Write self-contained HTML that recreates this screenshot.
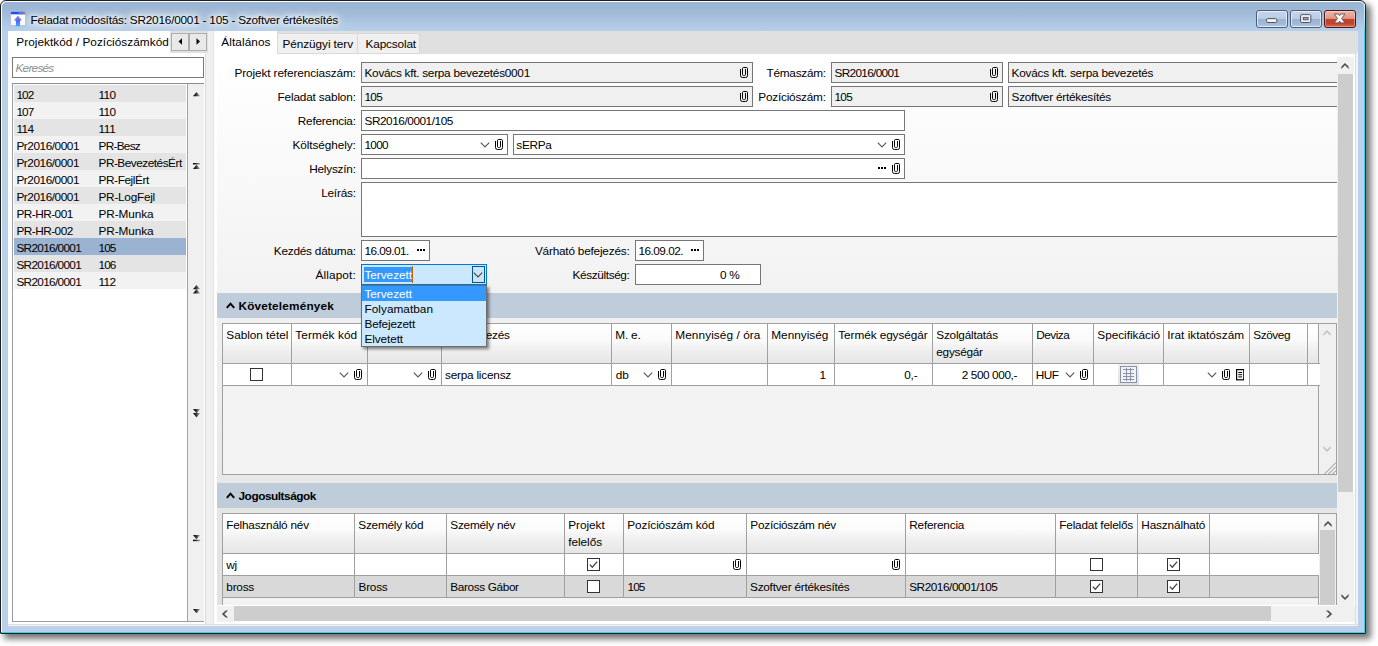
<!DOCTYPE html>
<html lang="hu"><head><meta charset="utf-8"><title>Feladat módosítás</title><style>
html,body{margin:0;padding:0;}
body{width:1378px;height:646px;background:#fff;position:relative;overflow:hidden;font-family:"Liberation Sans",sans-serif;font-size:11.8px;color:#000;}
body div,body span.t,svg.i{position:absolute;}
span.t{white-space:pre;display:block;height:16px;line-height:16px;}
#win{left:0;top:0;width:1366px;height:634px;box-sizing:border-box;border:1px solid #1e1e1e;border-radius:6px 6px 1px 1px;background:#b9d1ea;box-shadow:inset 1px 1px 0 0 rgba(255,255,255,.92),inset 0 0 0 1px rgba(255,255,255,.4), 4.5px 4.5px 6px 0 rgba(0,0,0,.54);}
#titlebar{left:2px;top:2px;width:1362px;height:29px;border-radius:5px 5px 0 0;background:linear-gradient(#99b4d3 0%,#a0bad8 40%,#afc8e3 75%,#b7d0ea 100%);}
.cb{top:10px;height:18px;box-sizing:border-box;border:1px solid #4d5d7a;border-radius:3px;background:linear-gradient(#c4d5ea 0%,#bacee6 46%,#9cb4d3 52%,#a2bad8 80%,#b6cce6 100%);box-shadow:inset 0 0 0 1px rgba(255,255,255,.6);}
.cb svg{position:absolute;left:0;top:0;}
.cb.close{background:linear-gradient(#ecb6a8 0%,#e09a88 46%,#c2452c 52%,#c04028 75%,#d66a4c 100%);border-color:#4a1520;box-shadow:inset 0 0 0 1px rgba(255,255,255,.35);}
#sp{overflow:hidden;}
</style></head><body>
<div id="win"></div>
<div id="titlebar"></div>
<svg width="0" height="0" style="position:absolute"><defs><linearGradient id="ag" x1="0" x2="0" y1="0" y2="1"><stop offset="0" stop-color="#9a8cf2"/><stop offset="0.5" stop-color="#5462fa"/><stop offset="1" stop-color="#3fa8ff"/></linearGradient></defs></svg>
<svg class="i" style="left:10px;top:11px;" width="16" height="16" viewBox="0 0 16 16"><rect x="0.5" y="0.5" width="15" height="14" fill="#fcfcf7" stroke="#b4bdf0"/><rect x="0.8" y="0.8" width="14.4" height="2.5" fill="#1f4fe2"/><rect x="8.5" y="0.8" width="4.3" height="2.5" fill="#4c7cec"/><rect x="13" y="1" width="2" height="2.2" fill="#f0602e"/><path d="M7.9 4.6L11.9 9.6H10V15.2H5.9V9.6H4Z" fill="url(#ag)"/></svg>
<span class="t" style="top:12px;letter-spacing:-0.224px;left:30.5px;text-shadow:0 0 5px #fff,0 0 7px #fff,0 0 9px #fff,0 0 12px #fff,0 0 14px rgba(255,255,255,.9);">Feladat módosítás: SR2016/0001 - 105 - Szoftver értékesítés</span>
<div class="cb" style="left:1256px;width:32px;"><svg width="30" height="16" viewBox="0 0 30 16"><rect x="9.6" y="7.6" width="10.2" height="3.9" rx="1.2" fill="#f2f2f2" stroke="#4f5560" stroke-width="1"/></svg></div>
<div class="cb" style="left:1290px;width:32px;"><svg width="30" height="16" viewBox="0 0 30 16"><rect x="9.6" y="3.6" width="10.2" height="7.9" rx="1.2" fill="#f2f2f2" stroke="#4f5560" stroke-width="1"/><rect x="12.3" y="6.4" width="4.8" height="2.4" fill="#8ea8cc" stroke="#4f5560" stroke-width="0.9"/></svg></div>
<div class="cb close" style="left:1324px;width:32px;"><svg width="30" height="16" viewBox="0 0 30 16"><path transform="translate(9.2,3)" d="M0 0H4.2L5.4 1.7L6.6 0H10.8L7.5 4.45L10.8 8.9H6.6L5.4 7.2L4.2 8.9H0L3.3 4.45Z" fill="#f6f6f6" stroke="#6a5050" stroke-width="0.9" stroke-linejoin="round"/></svg></div>
<div style="left:1364px;top:4px;width:1px;height:629px;background:linear-gradient(#d4f3fa 0,#9be7f6 18px,#2ed3ee 30px);"></div>
<div style="left:1px;top:632px;width:1364px;height:1px;background:#2ed3ee;"></div>
<div style="left:8px;top:31px;width:1350px;height:595px;background:#fff;"></div>
<span class="t" style="top:34px;letter-spacing:0.041px;left:16.3px;">Projektkód / Pozíciószámkód</span>
<div style="left:12px;top:57px;width:192px;height:21px;background:#fff;border:1px solid #7a7a7a;box-sizing:border-box;"></div>
<span class="t" style="top:60px;letter-spacing:-0.756px;left:15.5px;font-style:italic;color:#8e8e8e;">Keresés</span>
<div style="left:12px;top:83px;width:192px;height:539px;background:#fff;border:1px solid #9a9da6;border-top-color:#8a8d94;border-right:none;box-sizing:border-box;"></div>
<div style="left:14px;top:85px;width:172px;height:17px;background:#e4e4e4;"></div>
<span class="t" style="top:87px;letter-spacing:-0.896px;left:16.4px;">102</span>
<span class="t" style="top:87px;letter-spacing:-0.604px;left:98.5px;">110</span>
<div style="left:14px;top:102px;width:172px;height:17px;background:#f2f2f2;"></div>
<span class="t" style="top:104px;letter-spacing:-0.896px;left:16.4px;">107</span>
<span class="t" style="top:104px;letter-spacing:-0.604px;left:98.5px;">110</span>
<div style="left:14px;top:119px;width:172px;height:17px;background:#e4e4e4;"></div>
<span class="t" style="top:121px;letter-spacing:-0.604px;left:16.4px;">114</span>
<span class="t" style="top:121px;letter-spacing:-0.312px;left:98.5px;">111</span>
<div style="left:14px;top:136px;width:172px;height:17px;background:#f2f2f2;"></div>
<span class="t" style="top:138px;letter-spacing:-0.444px;left:16.4px;">Pr2016/0001</span>
<span class="t" style="top:138px;letter-spacing:-0.722px;left:98.5px;">PR-Besz</span>
<div style="left:14px;top:153px;width:172px;height:17px;background:#e4e4e4;"></div>
<span class="t" style="top:155px;letter-spacing:-0.444px;left:16.4px;">Pr2016/0001</span>
<span class="t" style="top:155px;letter-spacing:-0.487px;left:98.5px;">PR-BevezetésÉrt</span>
<div style="left:14px;top:170px;width:172px;height:17px;background:#f2f2f2;"></div>
<span class="t" style="top:172px;letter-spacing:-0.444px;left:16.4px;">Pr2016/0001</span>
<span class="t" style="top:172px;letter-spacing:-0.392px;left:98.5px;">PR-FejlÉrt</span>
<div style="left:14px;top:187px;width:172px;height:17px;background:#e4e4e4;"></div>
<span class="t" style="top:189px;letter-spacing:-0.444px;left:16.4px;">Pr2016/0001</span>
<span class="t" style="top:189px;letter-spacing:-0.253px;left:98.5px;">PR-LogFejl</span>
<div style="left:14px;top:204px;width:172px;height:17px;background:#f2f2f2;"></div>
<span class="t" style="top:206px;letter-spacing:-0.509px;left:16.4px;">PR-HR-001</span>
<span class="t" style="top:206px;letter-spacing:-0.093px;left:98.5px;">PR-Munka</span>
<div style="left:14px;top:221px;width:172px;height:17px;background:#e4e4e4;"></div>
<span class="t" style="top:223px;letter-spacing:-0.509px;left:16.4px;">PR-HR-002</span>
<span class="t" style="top:223px;letter-spacing:-0.093px;left:98.5px;">PR-Munka</span>
<div style="left:14px;top:238px;width:172px;height:17px;background:#99b3d1;"></div>
<span class="t" style="top:240px;letter-spacing:-0.679px;left:16.4px;">SR2016/0001</span>
<span class="t" style="top:240px;letter-spacing:-0.896px;left:98.5px;">105</span>
<div style="left:14px;top:255px;width:172px;height:17px;background:#e4e4e4;"></div>
<span class="t" style="top:257px;letter-spacing:-0.679px;left:16.4px;">SR2016/0001</span>
<span class="t" style="top:257px;letter-spacing:-0.896px;left:98.5px;">106</span>
<div style="left:14px;top:272px;width:172px;height:17px;background:#f2f2f2;"></div>
<span class="t" style="top:274px;letter-spacing:-0.679px;left:16.4px;">SR2016/0001</span>
<span class="t" style="top:274px;letter-spacing:-0.604px;left:98.5px;">112</span>
<div style="left:187px;top:84px;width:1px;height:537px;background:#9ba3b3;"></div>
<div style="left:188px;top:84px;width:16px;height:537px;background:#f0f0f0;"></div>
<svg width="0" height="0" style="position:absolute"><defs><linearGradient id="tg" x1="0" x2="1" y1="0" y2="0"><stop offset="0" stop-color="#000"/><stop offset="0.45" stop-color="#333"/><stop offset="1" stop-color="#bbb"/></linearGradient></defs></svg>
<svg class="i" style="left:192.8px;top:91.7px;" width="8" height="10" viewBox="0 0 8 10"><path d="M0 4.3L3.5 0L7.2 4.3Z" fill="url(#tg)"/></svg>
<svg class="i" style="left:192.8px;top:163px;" width="8" height="10" viewBox="0 0 8 10"><rect x="0" y="0" width="7.2" height="1.5" fill="url(#tg)"/><path d="M0 6L3.5 1.7L7.2 6Z" fill="url(#tg)"/></svg>
<svg class="i" style="left:192.8px;top:284.6px;" width="8" height="10" viewBox="0 0 8 10"><path d="M0 4.3L3.5 0L7.2 4.3Z" fill="url(#tg)"/><path d="M0 8.4L3.5 4.1L7.2 8.4Z" fill="url(#tg)"/></svg>
<svg class="i" style="left:192.8px;top:408.8px;" width="8" height="10" viewBox="0 0 8 10"><path d="M0 0L3.5 4.3L7.2 0Z" fill="url(#tg)"/><path d="M0 4.1L3.5 8.4L7.2 4.1Z" fill="url(#tg)"/></svg>
<svg class="i" style="left:192.8px;top:535px;" width="8" height="10" viewBox="0 0 8 10"><path d="M0 0L3.5 4.3L7.2 0Z" fill="url(#tg)"/><rect x="0" y="4.7" width="7.2" height="1.5" fill="url(#tg)"/></svg>
<svg class="i" style="left:192.8px;top:608.8px;" width="8" height="10" viewBox="0 0 8 10"><path d="M0 0L3.5 4.3L7.2 0Z" fill="url(#tg)"/></svg>
<div style="left:205px;top:31px;width:8px;height:595px;background:#f0f0f0;"></div>
<div style="left:205px;top:54px;width:1px;height:572px;background:#dcdcdc;"></div>
<div style="left:213px;top:31px;width:1px;height:595px;background:#e3e3e3;"></div>
<div style="left:170px;top:31px;width:38px;height:22px;background:#e0e0e0;"></div>
<div style="left:171px;top:33px;width:18px;height:18px;background:#e9e9e9;border:1px solid #adadad;box-sizing:border-box;"></div>
<div style="left:189px;top:33px;width:18px;height:18px;background:#e9e9e9;border:1px solid #adadad;box-sizing:border-box;"></div>
<svg class="i" style="left:177.5px;top:38px;" width="5" height="7" viewBox="0 0 5 7"><path d="M4 0.2L0.5 3.5L4 6.8Z" fill="#000"/></svg>
<svg class="i" style="left:196px;top:38px;" width="5" height="7" viewBox="0 0 5 7"><path d="M0.5 0.2L4 3.5L0.5 6.8Z" fill="#000"/></svg>
<div style="left:214px;top:31px;width:1144px;height:23px;background:#e0e0e0;"></div>
<div style="left:214px;top:31px;width:63px;height:23px;background:#fff;"></div>
<span class="t" style="top:34px;letter-spacing:0.084px;left:221.3px;">Általános</span>
<div style="left:277px;top:33px;width:81px;height:21px;background:#f0f0f0;border:1px solid #d9d9d9;box-sizing:border-box;"></div>
<span class="t" style="top:36px;letter-spacing:-0.076px;left:282.5px;">Pénzügyi terv</span>
<div style="left:358px;top:33px;width:62px;height:21px;background:#f0f0f0;border:1px solid #d9d9d9;border-left:none;box-sizing:border-box;"></div>
<span class="t" style="top:36px;letter-spacing:-0.147px;left:365.5px;">Kapcsolat</span>
<div style="left:1355px;top:53px;width:1px;height:571px;background:#dcdcdc;"></div>
<div style="left:1356px;top:53px;width:2px;height:573px;background:#f3f3f1;"></div>
<div style="left:8px;top:624px;width:1350px;height:1px;background:#e3e0dc;"></div>
<div style="left:8px;top:625px;width:1350px;height:1px;background:#f0f0f0;"></div>
<div id="sp" style="left:217px;top:57px;width:1120px;height:549px;background:linear-gradient(#fff,#e0e0e0);background-size:100% 565px;">
<span class="t" style="top:8px;letter-spacing:-0.115px;left:17.5px;">Projekt referenciaszám:</span>
<div style="left:144px;top:5px;width:392px;height:21px;background:#f0f0f0;border:1px solid #767676;box-sizing:border-box;"></div>
<span class="t" style="top:8px;letter-spacing:-0.269px;left:147.5px;">Kovács kft. serpa bevezetés0001</span>
<svg class="i" style="left:523px;top:10px;" width="8" height="11" viewBox="0 0 8 11"><path d="M0.5 2V8.6Q0.5 10.5 2.5 10.5H5.5Q7.5 10.5 7.5 8.6V1.6Q7.5 0.5 6.4 0.5H3.6Q2.5 0.5 2.5 1.6V7.4Q2.5 8.5 3.6 8.5H4.4Q5.5 8.5 5.5 7.4V2" fill="none" stroke="#000" stroke-width="1"/></svg>
<span class="t" style="top:8px;letter-spacing:-0.267px;left:549.57px;">Témaszám:</span>
<div style="left:614px;top:5px;width:172px;height:21px;background:#f0f0f0;border:1px solid #767676;box-sizing:border-box;"></div>
<span class="t" style="top:8px;letter-spacing:-0.679px;left:617.5px;">SR2016/0001</span>
<svg class="i" style="left:773px;top:10px;" width="8" height="11" viewBox="0 0 8 11"><path d="M0.5 2V8.6Q0.5 10.5 2.5 10.5H5.5Q7.5 10.5 7.5 8.6V1.6Q7.5 0.5 6.4 0.5H3.6Q2.5 0.5 2.5 1.6V7.4Q2.5 8.5 3.6 8.5H4.4Q5.5 8.5 5.5 7.4V2" fill="none" stroke="#000" stroke-width="1"/></svg>
<div style="left:791px;top:5px;width:340px;height:21px;background:#f0f0f0;border:1px solid #767676;box-sizing:border-box;"></div>
<span class="t" style="top:8px;letter-spacing:-0.213px;left:794.5px;">Kovács kft. serpa bevezetés</span>
<span class="t" style="top:32px;letter-spacing:-0.159px;left:60.5px;">Feladat sablon:</span>
<div style="left:144px;top:29px;width:392px;height:21px;background:#f0f0f0;border:1px solid #767676;box-sizing:border-box;"></div>
<span class="t" style="top:32px;letter-spacing:-0.729px;left:147.5px;">105</span>
<svg class="i" style="left:523px;top:34px;" width="8" height="11" viewBox="0 0 8 11"><path d="M0.5 2V8.6Q0.5 10.5 2.5 10.5H5.5Q7.5 10.5 7.5 8.6V1.6Q7.5 0.5 6.4 0.5H3.6Q2.5 0.5 2.5 1.6V7.4Q2.5 8.5 3.6 8.5H4.4Q5.5 8.5 5.5 7.4V2" fill="none" stroke="#000" stroke-width="1"/></svg>
<span class="t" style="top:32px;letter-spacing:-0.228px;left:541.37px;">Pozíciószám:</span>
<div style="left:614px;top:29px;width:172px;height:21px;background:#f0f0f0;border:1px solid #767676;box-sizing:border-box;"></div>
<span class="t" style="top:32px;letter-spacing:-0.729px;left:617.5px;">105</span>
<svg class="i" style="left:773px;top:34px;" width="8" height="11" viewBox="0 0 8 11"><path d="M0.5 2V8.6Q0.5 10.5 2.5 10.5H5.5Q7.5 10.5 7.5 8.6V1.6Q7.5 0.5 6.4 0.5H3.6Q2.5 0.5 2.5 1.6V7.4Q2.5 8.5 3.6 8.5H4.4Q5.5 8.5 5.5 7.4V2" fill="none" stroke="#000" stroke-width="1"/></svg>
<div style="left:791px;top:29px;width:340px;height:21px;background:#f0f0f0;border:1px solid #767676;box-sizing:border-box;"></div>
<span class="t" style="top:32px;letter-spacing:-0.239px;left:794.5px;">Szoftver értékesítés</span>
<span class="t" style="top:56px;letter-spacing:-0.214px;left:80.81px;">Referencia:</span>
<div style="left:144px;top:53px;width:544px;height:21px;background:#fff;border:1px solid #767676;box-sizing:border-box;"></div>
<span class="t" style="top:56px;letter-spacing:-0.449px;left:147.5px;">SR2016/0001/105</span>
<span class="t" style="top:80px;letter-spacing:-0.074px;left:75.4px;">Költséghely:</span>
<div style="left:144px;top:77px;width:147px;height:21px;background:#fff;border:1px solid #767676;box-sizing:border-box;"></div>
<span class="t" style="top:80px;letter-spacing:-0.688px;left:147.5px;">1000</span>
<svg class="i" style="left:263px;top:84.5px;" width="10" height="6" viewBox="0 0 10 6"><path d="M0.8 0.6L5 4.9L9.2 0.6" fill="none" stroke="#555" stroke-width="1.1"/></svg>
<svg class="i" style="left:278px;top:82px;" width="8" height="11" viewBox="0 0 8 11"><path d="M0.5 2V8.6Q0.5 10.5 2.5 10.5H5.5Q7.5 10.5 7.5 8.6V1.6Q7.5 0.5 6.4 0.5H3.6Q2.5 0.5 2.5 1.6V7.4Q2.5 8.5 3.6 8.5H4.4Q5.5 8.5 5.5 7.4V2" fill="none" stroke="#000" stroke-width="1"/></svg>
<div style="left:296px;top:77px;width:392px;height:21px;background:#fff;border:1px solid #767676;box-sizing:border-box;"></div>
<span class="t" style="top:80px;letter-spacing:-0.286px;left:299.3px;">sERPa</span>
<svg class="i" style="left:659.9px;top:84.5px;" width="10" height="6" viewBox="0 0 10 6"><path d="M0.8 0.6L5 4.9L9.2 0.6" fill="none" stroke="#555" stroke-width="1.1"/></svg>
<svg class="i" style="left:675px;top:82px;" width="8" height="11" viewBox="0 0 8 11"><path d="M0.5 2V8.6Q0.5 10.5 2.5 10.5H5.5Q7.5 10.5 7.5 8.6V1.6Q7.5 0.5 6.4 0.5H3.6Q2.5 0.5 2.5 1.6V7.4Q2.5 8.5 3.6 8.5H4.4Q5.5 8.5 5.5 7.4V2" fill="none" stroke="#000" stroke-width="1"/></svg>
<span class="t" style="top:104px;letter-spacing:-0.210px;left:92.17px;">Helyszín:</span>
<div style="left:144px;top:101px;width:544px;height:21px;background:#fff;border:1px solid #767676;box-sizing:border-box;"></div>
<svg class="i" style="left:661px;top:110px;" width="8" height="2" viewBox="0 0 8 2"><rect x="0" y="0" width="2" height="2" fill="#000"/><rect x="3" y="0" width="2" height="2" fill="#000"/><rect x="6" y="0" width="2" height="2" fill="#000"/></svg>
<svg class="i" style="left:675px;top:106px;" width="8" height="11" viewBox="0 0 8 11"><path d="M0.5 2V8.6Q0.5 10.5 2.5 10.5H5.5Q7.5 10.5 7.5 8.6V1.6Q7.5 0.5 6.4 0.5H3.6Q2.5 0.5 2.5 1.6V7.4Q2.5 8.5 3.6 8.5H4.4Q5.5 8.5 5.5 7.4V2" fill="none" stroke="#000" stroke-width="1"/></svg>
<span class="t" style="top:128px;letter-spacing:-0.201px;left:104.13px;">Leírás:</span>
<div style="left:144px;top:125px;width:990px;height:55px;background:#fff;border:1px solid #767676;box-sizing:border-box;"></div>
<span class="t" style="top:186px;letter-spacing:-0.237px;left:56.85px;">Kezdés dátuma:</span>
<div style="left:144px;top:183px;width:69px;height:21px;background:#fff;border:1px solid #767676;box-sizing:border-box;"></div>
<span class="t" style="top:186px;letter-spacing:-0.546px;left:147.5px;">16.09.01.</span>
<svg class="i" style="left:200px;top:192px;" width="8" height="2" viewBox="0 0 8 2"><rect x="0" y="0" width="2" height="2" fill="#000"/><rect x="3" y="0" width="2" height="2" fill="#000"/><rect x="6" y="0" width="2" height="2" fill="#000"/></svg>
<span class="t" style="top:186px;letter-spacing:-0.213px;left:317.94px;">Várható befejezés:</span>
<div style="left:418px;top:183px;width:69px;height:21px;background:#fff;border:1px solid #767676;box-sizing:border-box;"></div>
<span class="t" style="top:186px;letter-spacing:-0.524px;left:421.5px;">16.09.02.</span>
<svg class="i" style="left:474px;top:192px;" width="8" height="2" viewBox="0 0 8 2"><rect x="0" y="0" width="2" height="2" fill="#000"/><rect x="3" y="0" width="2" height="2" fill="#000"/><rect x="6" y="0" width="2" height="2" fill="#000"/></svg>
<span class="t" style="top:210px;letter-spacing:0.118px;left:98.5px;">Állapot:</span>
<div style="left:144px;top:207px;width:126px;height:21px;background:#cce8ff;border:1px solid #0078d7;box-sizing:border-box;"></div>
<div style="left:147px;top:210px;width:48px;height:15px;background:#3399ff;"></div>
<span class="t" style="top:210px;letter-spacing:-0.042px;left:147.5px;color:#fff;">Tervezett</span>
<div style="left:195px;top:209px;width:1px;height:17px;background:#c4640a;"></div>
<div style="left:255px;top:209px;width:13px;height:17px;background:#cce4f7;border:1px solid #00539c;box-sizing:border-box;"></div>
<svg class="i" style="left:256.2px;top:215px;" width="10" height="6" viewBox="0 0 10 6"><path d="M0.8 0.6L5 4.9L9.2 0.6" fill="none" stroke="#444" stroke-width="1.1"/></svg>
<span class="t" style="top:210px;letter-spacing:-0.364px;left:355.5px;">Készültség:</span>
<div style="left:418px;top:207px;width:126px;height:21px;background:#fff;border:1px solid #767676;box-sizing:border-box;"></div>
<span class="t" style="top:210px;letter-spacing:-0.264px;left:502.96px;">0 %</span>
<div style="left:0px;top:236px;width:1120px;height:25px;background:#bfccda;"></div>
<svg class="i" style="left:8.5px;top:244.6px;" width="9" height="7" viewBox="0 0 9 7"><path d="M0.8 5.8L4.5 1.7L8.2 5.8" fill="none" stroke="#000" stroke-width="2"/></svg>
<span class="t" style="top:241px;letter-spacing:0.169px;left:21.5px;font-weight:bold;">Követelemények</span>
<div style="left:5px;top:266px;width:1115px;height:152px;background:#f3f3f3;border:1px solid #a0a0a0;box-sizing:border-box;"></div>
<div style="left:5px;top:266px;width:1097px;height:41px;background:linear-gradient(#fff 0%,#fbfbfb 40%,#f1f1f1 60%,#e6e6e6 100%);border:1px solid #a0a0a0;box-sizing:border-box;"></div>
<div style="left:5px;top:306px;width:1099px;height:23px;background:#fff;border:1px solid #a0a0a0;border-right:none;box-sizing:border-box;"></div>
<div style="left:74px;top:266px;width:1px;height:63px;background:#a0a0a0;"></div>
<div style="left:150px;top:266px;width:1px;height:63px;background:#a0a0a0;"></div>
<div style="left:224px;top:266px;width:1px;height:63px;background:#a0a0a0;"></div>
<div style="left:394px;top:266px;width:1px;height:63px;background:#a0a0a0;"></div>
<div style="left:454px;top:266px;width:1px;height:63px;background:#a0a0a0;"></div>
<div style="left:550px;top:266px;width:1px;height:63px;background:#a0a0a0;"></div>
<div style="left:617px;top:266px;width:1px;height:63px;background:#a0a0a0;"></div>
<div style="left:715px;top:266px;width:1px;height:63px;background:#a0a0a0;"></div>
<div style="left:815px;top:266px;width:1px;height:63px;background:#a0a0a0;"></div>
<div style="left:876px;top:266px;width:1px;height:63px;background:#a0a0a0;"></div>
<div style="left:946px;top:266px;width:1px;height:63px;background:#a0a0a0;"></div>
<div style="left:1032px;top:266px;width:1px;height:63px;background:#a0a0a0;"></div>
<div style="left:1090px;top:266px;width:1px;height:63px;background:#a0a0a0;"></div>
<div style="left:1101px;top:328px;width:1px;height:89px;background:#a0a0a0;"></div>
<span class="t" style="top:270px;letter-spacing:-0.027px;left:9.3px;">Sablon tétel</span>
<span class="t" style="top:270px;letter-spacing:0.101px;left:78.3px;">Termék kód</span>
<span class="t" style="top:270px;letter-spacing:-0.261px;left:228.3px;">Megnevezés</span>
<span class="t" style="top:270px;letter-spacing:-0.204px;left:398.3px;">M. e.</span>
<span class="t" style="top:270px;letter-spacing:0.086px;left:458.3px;">Mennyiség / óra</span>
<span class="t" style="top:270px;letter-spacing:-0.007px;left:554.3px;">Mennyiség</span>
<span class="t" style="top:270px;letter-spacing:-0.084px;left:621.3px;">Termék egységár</span>
<span class="t" style="top:270px;letter-spacing:-0.224px;left:719.3px;">Szolgáltatás</span>
<span class="t" style="top:287px;letter-spacing:-0.268px;left:719.3px;">egységár</span>
<span class="t" style="top:270px;letter-spacing:-0.512px;left:819.3px;">Deviza</span>
<span class="t" style="top:270px;letter-spacing:-0.018px;left:880.3px;">Specifikáció</span>
<span class="t" style="top:270px;letter-spacing:0.002px;left:950.3px;">Irat iktatószám</span>
<span class="t" style="top:270px;letter-spacing:-0.435px;left:1036.3px;">Szöveg</span>
<svg class="i" style="left:33px;top:311px;" width="13" height="13" viewBox="0 0 13 13"><rect x="0.5" y="0.5" width="12" height="12" fill="#fff" stroke="#333"/></svg>
<svg class="i" style="left:121.7px;top:314.7px;" width="10" height="6" viewBox="0 0 10 6"><path d="M0.8 0.6L5 4.9L9.2 0.6" fill="none" stroke="#555" stroke-width="1.1"/></svg>
<svg class="i" style="left:137px;top:312px;" width="8" height="11" viewBox="0 0 8 11"><path d="M0.5 2V8.6Q0.5 10.5 2.5 10.5H5.5Q7.5 10.5 7.5 8.6V1.6Q7.5 0.5 6.4 0.5H3.6Q2.5 0.5 2.5 1.6V7.4Q2.5 8.5 3.6 8.5H4.4Q5.5 8.5 5.5 7.4V2" fill="none" stroke="#000" stroke-width="1"/></svg>
<svg class="i" style="left:195.5px;top:314.7px;" width="10" height="6" viewBox="0 0 10 6"><path d="M0.8 0.6L5 4.9L9.2 0.6" fill="none" stroke="#555" stroke-width="1.1"/></svg>
<svg class="i" style="left:211px;top:312px;" width="8" height="11" viewBox="0 0 8 11"><path d="M0.5 2V8.6Q0.5 10.5 2.5 10.5H5.5Q7.5 10.5 7.5 8.6V1.6Q7.5 0.5 6.4 0.5H3.6Q2.5 0.5 2.5 1.6V7.4Q2.5 8.5 3.6 8.5H4.4Q5.5 8.5 5.5 7.4V2" fill="none" stroke="#000" stroke-width="1"/></svg>
<span class="t" style="top:310px;letter-spacing:-0.220px;left:228px;">serpa licensz</span>
<span class="t" style="top:310px;letter-spacing:-0.063px;left:398.75px;">db</span>
<svg class="i" style="left:426.2px;top:314.7px;" width="10" height="6" viewBox="0 0 10 6"><path d="M0.8 0.6L5 4.9L9.2 0.6" fill="none" stroke="#555" stroke-width="1.1"/></svg>
<svg class="i" style="left:441px;top:312px;" width="8" height="11" viewBox="0 0 8 11"><path d="M0.5 2V8.6Q0.5 10.5 2.5 10.5H5.5Q7.5 10.5 7.5 8.6V1.6Q7.5 0.5 6.4 0.5H3.6Q2.5 0.5 2.5 1.6V7.4Q2.5 8.5 3.6 8.5H4.4Q5.5 8.5 5.5 7.4V2" fill="none" stroke="#000" stroke-width="1"/></svg>
<span class="t" style="top:310px;letter-spacing:-0.256px;left:602.44px;">1</span>
<span class="t" style="top:310px;letter-spacing:-0.157px;left:687.2px;">0,-</span>
<span class="t" style="top:310px;letter-spacing:-0.400px;left:744.7px;">2 500 000,-</span>
<span class="t" style="top:310px;letter-spacing:-0.584px;left:818.8px;">HUF</span>
<svg class="i" style="left:847.7px;top:314.7px;" width="10" height="6" viewBox="0 0 10 6"><path d="M0.8 0.6L5 4.9L9.2 0.6" fill="none" stroke="#555" stroke-width="1.1"/></svg>
<svg class="i" style="left:863px;top:312px;" width="8" height="11" viewBox="0 0 8 11"><path d="M0.5 2V8.6Q0.5 10.5 2.5 10.5H5.5Q7.5 10.5 7.5 8.6V1.6Q7.5 0.5 6.4 0.5H3.6Q2.5 0.5 2.5 1.6V7.4Q2.5 8.5 3.6 8.5H4.4Q5.5 8.5 5.5 7.4V2" fill="none" stroke="#000" stroke-width="1"/></svg>
<div style="left:901px;top:307px;width:21px;height:21px;background:linear-gradient(#efefef,#e2e2e2);"></div>
<svg class="i" style="left:903px;top:309px;" width="17" height="17" viewBox="0 0 17 17"><rect x="0.5" y="0.5" width="16" height="16" fill="#f1f1f1" stroke="#8693ab"/><path d="M6.5 2v13M10.5 2v13M3 3.5h11M3 7.5h11M3 10.5h11M3 13.5h11" stroke="#8693ab" stroke-width="1"/></svg>
<svg class="i" style="left:989.7px;top:314.7px;" width="10" height="6" viewBox="0 0 10 6"><path d="M0.8 0.6L5 4.9L9.2 0.6" fill="none" stroke="#555" stroke-width="1.1"/></svg>
<svg class="i" style="left:1005px;top:312px;" width="8" height="11" viewBox="0 0 8 11"><path d="M0.5 2V8.6Q0.5 10.5 2.5 10.5H5.5Q7.5 10.5 7.5 8.6V1.6Q7.5 0.5 6.4 0.5H3.6Q2.5 0.5 2.5 1.6V7.4Q2.5 8.5 3.6 8.5H4.4Q5.5 8.5 5.5 7.4V2" fill="none" stroke="#000" stroke-width="1"/></svg>
<svg class="i" style="left:1018.5px;top:312px;" width="8.5" height="11.5" viewBox="0 0 8.5 11.5"><rect x="0.6" y="0.6" width="7.2" height="10.2" fill="#fff" stroke="#000" stroke-width="1.2"/><path d="M2.3 3.5h3.8M2.3 5.7h3.8M2.3 7.9h3.8" stroke="#000" stroke-width="1"/></svg>
<div style="left:1103px;top:267px;width:16px;height:150px;background:#f0f0f0;"></div>
<svg class="i" style="left:1104.4px;top:270px;" width="12" height="12" viewBox="0 0 12 12"><polygon points="6,2.9 9.6,6.6 9.6,9 6,5.3 2.4,9 2.4,6.6" fill="#c4c4c4"/></svg>
<svg class="i" style="left:1104.4px;top:385.6px;" width="12" height="12" viewBox="0 0 12 12"><polygon points="6,9.1 9.6,5.4 9.6,3 6,6.7 2.4,3 2.4,5.4" fill="#c4c4c4"/></svg>
<svg class="i" style="left:1107px;top:405px;" width="12" height="12" viewBox="0 0 12 12"><path d="M12 0.5L0.5 12M12 4.5L4.5 12M12 8.5L8.5 12" stroke="#8c8c8c" stroke-width="1"/></svg>
<div style="left:0px;top:426px;width:1120px;height:25px;background:#bfccda;"></div>
<svg class="i" style="left:8.5px;top:434.6px;" width="9" height="7" viewBox="0 0 9 7"><path d="M0.8 5.8L4.5 1.7L8.2 5.8" fill="none" stroke="#000" stroke-width="2"/></svg>
<span class="t" style="top:431px;letter-spacing:-0.444px;left:21.5px;font-weight:bold;">Jogosultságok</span>
<div style="left:5px;top:456px;width:1115px;height:128px;background:#f3f3f3;border:1px solid #a0a0a0;box-sizing:border-box;"></div>
<div style="left:5px;top:456px;width:1097px;height:41px;background:linear-gradient(#fff 0%,#fbfbfb 40%,#f1f1f1 60%,#e6e6e6 100%);border:1px solid #a0a0a0;box-sizing:border-box;"></div>
<div style="left:5px;top:496px;width:1099px;height:23px;background:#fff;border:1px solid #a0a0a0;border-right:none;box-sizing:border-box;"></div>
<div style="left:5px;top:518px;width:1097px;height:23px;background:#d9d9d9;border:1px solid #a0a0a0;border-right:1px solid #a0a0a0;box-sizing:border-box;"></div>
<div style="left:137px;top:456px;width:1px;height:85px;background:#a0a0a0;"></div>
<div style="left:229px;top:456px;width:1px;height:85px;background:#a0a0a0;"></div>
<div style="left:347px;top:456px;width:1px;height:85px;background:#a0a0a0;"></div>
<div style="left:406px;top:456px;width:1px;height:85px;background:#a0a0a0;"></div>
<div style="left:529px;top:456px;width:1px;height:85px;background:#a0a0a0;"></div>
<div style="left:688px;top:456px;width:1px;height:85px;background:#a0a0a0;"></div>
<div style="left:838px;top:456px;width:1px;height:85px;background:#a0a0a0;"></div>
<div style="left:920px;top:456px;width:1px;height:85px;background:#a0a0a0;"></div>
<div style="left:992px;top:456px;width:1px;height:85px;background:#a0a0a0;"></div>
<div style="left:1101px;top:540px;width:1px;height:43px;background:#a0a0a0;"></div>
<span class="t" style="top:460px;letter-spacing:-0.223px;left:9.3px;">Felhasználó név</span>
<span class="t" style="top:460px;letter-spacing:-0.239px;left:141.3px;">Személy kód</span>
<span class="t" style="top:460px;letter-spacing:-0.239px;left:233.3px;">Személy név</span>
<span class="t" style="top:460px;letter-spacing:-0.047px;left:351.3px;">Projekt</span>
<span class="t" style="top:477px;letter-spacing:-0.059px;left:351.3px;">felelős</span>
<span class="t" style="top:460px;letter-spacing:-0.133px;left:410.3px;">Pozíciószám kód</span>
<span class="t" style="top:460px;letter-spacing:-0.232px;left:533.3px;">Pozíciószám név</span>
<span class="t" style="top:460px;letter-spacing:-0.222px;left:692.3px;">Referencia</span>
<span class="t" style="top:460px;letter-spacing:-0.199px;left:842.3px;">Feladat felelős</span>
<span class="t" style="top:460px;letter-spacing:-0.145px;left:924.3px;">Használható</span>
<span class="t" style="top:500px;letter-spacing:-0.217px;left:9.3px;">wj</span>
<svg class="i" style="left:370px;top:501px;" width="13" height="13" viewBox="0 0 13 13"><rect x="0.5" y="0.5" width="12" height="12" fill="#fff" stroke="#333"/><path d="M2.8 6.6L5.3 9.2L10.2 3.6" fill="none" stroke="#444" stroke-width="1.3"/></svg>
<svg class="i" style="left:516px;top:502px;" width="8" height="11" viewBox="0 0 8 11"><path d="M0.5 2V8.6Q0.5 10.5 2.5 10.5H5.5Q7.5 10.5 7.5 8.6V1.6Q7.5 0.5 6.4 0.5H3.6Q2.5 0.5 2.5 1.6V7.4Q2.5 8.5 3.6 8.5H4.4Q5.5 8.5 5.5 7.4V2" fill="none" stroke="#000" stroke-width="1"/></svg>
<svg class="i" style="left:675px;top:502px;" width="8" height="11" viewBox="0 0 8 11"><path d="M0.5 2V8.6Q0.5 10.5 2.5 10.5H5.5Q7.5 10.5 7.5 8.6V1.6Q7.5 0.5 6.4 0.5H3.6Q2.5 0.5 2.5 1.6V7.4Q2.5 8.5 3.6 8.5H4.4Q5.5 8.5 5.5 7.4V2" fill="none" stroke="#000" stroke-width="1"/></svg>
<svg class="i" style="left:873px;top:501px;" width="13" height="13" viewBox="0 0 13 13"><rect x="0.5" y="0.5" width="12" height="12" fill="#fff" stroke="#333"/></svg>
<svg class="i" style="left:950px;top:501px;" width="13" height="13" viewBox="0 0 13 13"><rect x="0.5" y="0.5" width="12" height="12" fill="#fff" stroke="#333"/><path d="M2.8 6.6L5.3 9.2L10.2 3.6" fill="none" stroke="#444" stroke-width="1.3"/></svg>
<span class="t" style="top:522px;letter-spacing:-0.225px;left:9.3px;">bross</span>
<span class="t" style="top:522px;letter-spacing:-0.235px;left:141.5px;">Bross</span>
<span class="t" style="top:522px;letter-spacing:-0.367px;left:233.3px;">Baross Gábor</span>
<svg class="i" style="left:370px;top:523px;" width="13" height="13" viewBox="0 0 13 13"><rect x="0.5" y="0.5" width="12" height="12" fill="#fff" stroke="#333"/></svg>
<span class="t" style="top:522px;letter-spacing:-0.896px;left:410.5px;">105</span>
<span class="t" style="top:522px;letter-spacing:-0.239px;left:533px;">Szoftver értékesítés</span>
<span class="t" style="top:522px;letter-spacing:-0.456px;left:692.2px;">SR2016/0001/105</span>
<svg class="i" style="left:873px;top:523px;" width="13" height="13" viewBox="0 0 13 13"><rect x="0.5" y="0.5" width="12" height="12" fill="#fff" stroke="#333"/><path d="M2.8 6.6L5.3 9.2L10.2 3.6" fill="none" stroke="#444" stroke-width="1.3"/></svg>
<svg class="i" style="left:950px;top:523px;" width="13" height="13" viewBox="0 0 13 13"><rect x="0.5" y="0.5" width="12" height="12" fill="#fff" stroke="#333"/><path d="M2.8 6.6L5.3 9.2L10.2 3.6" fill="none" stroke="#444" stroke-width="1.3"/></svg>
<div style="left:1102px;top:457px;width:17px;height:100px;background:#f0f0f0;"></div>
<div style="left:1103px;top:473px;width:15px;height:90px;background:#cdcdcd;"></div>
<svg class="i" style="left:1104.5px;top:460.5px;" width="12" height="12" viewBox="0 0 12 12"><polygon points="6,2.9 9.6,6.6 9.6,9 6,5.3 2.4,9 2.4,6.6" fill="#505050"/></svg>
<div style="left:144px;top:228px;width:126px;height:62px;background:#cce8ff;border:1px solid #6e6e6e;box-sizing:border-box;box-shadow:2px 2px 3px rgba(0,0,0,.5);"></div>
<div style="left:145px;top:229px;width:124px;height:15px;background:#3399ff;"></div>
<span class="t" style="top:229px;letter-spacing:-0.042px;left:147.5px;color:#fff;">Tervezett</span>
<span class="t" style="top:244px;letter-spacing:0.026px;left:147.5px;">Folyamatban</span>
<span class="t" style="top:259px;letter-spacing:-0.198px;left:147.5px;">Befejezett</span>
<span class="t" style="top:274px;letter-spacing:-0.107px;left:147.5px;">Elvetett</span>
</div>
<div style="left:1337px;top:57px;width:17px;height:549px;background:#f0f0f0;"></div>
<div style="left:1353px;top:74px;width:2px;height:418px;background:#fff;"></div>
<div style="left:1338px;top:74px;width:15px;height:418px;background:#cdcdcd;"></div>
<svg class="i" style="left:1339.4px;top:60px;" width="12" height="12" viewBox="0 0 12 12"><polygon points="6,2.9 9.6,6.6 9.6,9 6,5.3 2.4,9 2.4,6.6" fill="#505050"/></svg>
<svg class="i" style="left:1339.4px;top:591px;" width="12" height="12" viewBox="0 0 12 12"><polygon points="6,9.1 9.6,5.4 9.6,3 6,6.7 2.4,3 2.4,5.4" fill="#505050"/></svg>
<div style="left:217px;top:606px;width:1138px;height:16px;background:#f0f0f0;"></div>
<div style="left:234px;top:606px;width:1037px;height:15px;background:#cdcdcd;"></div>
<div style="left:234px;top:621px;width:1037px;height:1px;background:#fff;"></div>
<div style="left:217px;top:605px;width:1120px;height:1px;background:#fff;"></div>
<svg class="i" style="left:219.2px;top:607.6px;" width="12" height="12" viewBox="0 0 12 12"><polygon points="2.9,6 6.6,9.6 9,9.6 5.3,6 9,2.4 6.6,2.4" fill="#505050"/></svg>
<svg class="i" style="left:1322.8px;top:607.6px;" width="12" height="12" viewBox="0 0 12 12"><polygon points="9.1,6 5.4,9.6 3,9.6 6.7,6 3,2.4 5.4,2.4" fill="#505050"/></svg>
</body></html>
